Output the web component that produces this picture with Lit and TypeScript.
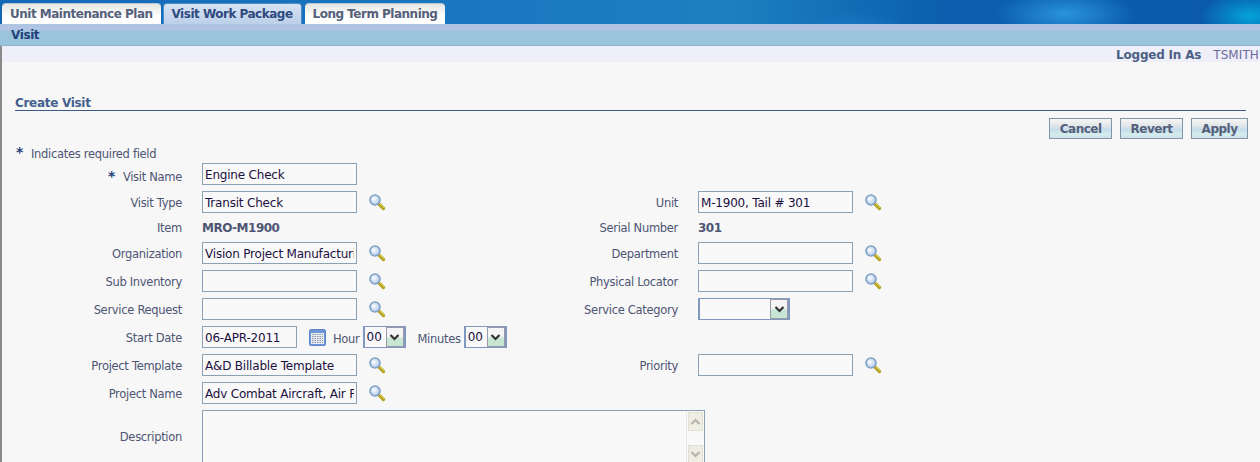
import { LitElement, html, css, svg } from 'lit';
import { customElement } from 'lit/decorators.js';

const lens = html`<svg class="lens" width="18" height="18" viewBox="0 0 18 18">
  <defs>
    <radialGradient id="glass" cx="0.4" cy="0.4" r="0.7">
      <stop offset="0" stop-color="#ffffff"></stop>
      <stop offset="1" stop-color="#9dbde4"></stop>
    </radialGradient>
  </defs>
  <path d="M10.5 10.5 L15.5 15.5" stroke="#b5a221" stroke-width="3.2" stroke-linecap="round"></path>
  <path d="M11 10 L16 15" stroke="#e0cf55" stroke-width="1"></path>
  <circle cx="7" cy="7" r="5" fill="url(#glass)" stroke="#7f9fc4" stroke-width="1.6"></circle>
</svg>`;

const calendar = html`<svg width="17" height="17" viewBox="0 0 17 17">
  <rect x="0.5" y="0.5" width="16" height="16" rx="1.5" fill="#6f96d6" stroke="#5f86c8"></rect>
  <rect x="2" y="4" width="13" height="11" fill="#e8edf4"></rect>
  ${[5, 7, 9, 11, 13].map(y => svg`<path d="M3 ${y + 0.5} H14" stroke="#8a93a6" stroke-dasharray="1.5 1"></path>`)}
</svg>`;

const chevron = html`<svg width="11" height="7" viewBox="0 0 11 7">
  <path d="M1.5 1 L5.5 5 L9.5 1" fill="none" stroke="#333" stroke-width="2.2"></path>
</svg>`;

@customElement('app-root')
export class AppRoot extends LitElement {
  static styles = css`
    :host {
      display: block;
      height: 462px;
      overflow: hidden;
      background: #f7f7f7;
      font-family: "DejaVu Sans", sans-serif;
      font-size: 11.5px;
      letter-spacing: -0.3px;
      color: #4d5573;
    }
    .banner {
      height: 24px;
      display: flex;
      align-items: flex-end;
      gap: 2px;
      padding-left: 2px;
      background:
        radial-gradient(ellipse 70px 24px at 1065px 14px, #2a93dc 0%, transparent 100%),
        radial-gradient(ellipse 50px 24px at 1250px 16px, #04a4d8 0%, transparent 100%),
        radial-gradient(ellipse 60px 18px at 850px 30px, #1c78c4 0%, transparent 100%),
        linear-gradient(90deg, #1468b8 0%, #1a78c0 40%, #1c80c0 58%, #0c60ae 74%, #0a58ac 100%);
    }
    .tab {
      height: 21px;
      box-sizing: border-box;
      padding: 3px 8px 0;
      border-radius: 4px 4px 0 0;
      border-top: 1px solid #b8c6d4;
      background: linear-gradient(#e4e6e2, #ffffff 60%);
      font-size: 12px;
      font-weight: bold;
      letter-spacing: -0.5px;
      color: #55607a;
      white-space: nowrap;
    }
    .tab.on {
      margin-right: 1px;
      background: linear-gradient(#d6e2f2, #bcd0ea);
      border: 1px solid #4a90c8;
      border-bottom: 0;
      color: #2f4a80;
    }
    .subnav {
      height: 22px;
      box-sizing: border-box;
      padding-left: 11px;
      background: linear-gradient(#afc3e3 0, #afc3e3 7px, #9cc3dc 7px);
      border-bottom: 1px solid #8fb6d0;
      font-size: 12px;
      font-weight: bold;
      letter-spacing: -0.4px;
      color: #1f3f7a;
      line-height: 22px;
    }
    .page { border-left: 2px solid #8a8a8a; height: 416px; }
    .user {
      height: 16px;
      box-sizing: border-box;
      padding: 1px 1px 0 0;
      background: #eeeff8;
      display: flex;
      justify-content: flex-end;
      gap: 12px;
      line-height: 16px;
      white-space: nowrap;
    }
    .user b { font-size: 12px; letter-spacing: -0.2px; color: #4d5f85; }
    .user span { font-size: 12px; letter-spacing: 0.1px; color: #6f6a9c; }
    .main {
      padding: 33px 14px 0 13px;
    }
    h2 {
      margin: 0;
      padding-top: 1px;
      height: 14px;
      font-size: 12px;
      font-weight: bold;
      letter-spacing: -0.3px;
      color: #43608f;
      line-height: 15px;
      border-bottom: 1px solid #38598a;
    }
    .actions {
      display: flex;
      justify-content: flex-end;
      gap: 8px;
      margin-top: 7px;
      margin-right: -2px;
    }
    button {
      height: 21px;
      padding: 0 9.5px;
      border: 1px solid #7f95a8;
      border-radius: 0;
      background: linear-gradient(#f4f5f5, #e6e9ea 30%, #c8dcec 55%, #d4ecec 80%, #d0e2e8);
      font: bold 12px "DejaVu Sans", sans-serif;
      letter-spacing: -0.5px;
      color: #55607a;
    }
    .note {
      margin: 7px 0 0 1px;
      display: flex;
      gap: 8px;
      line-height: 16px;
    }
    .star { color: #1f3f7a; font-weight: bold; font-size: 14px; line-height: 12px; }
    .form {
      margin: 1px 0 0 -15px;
      display: grid;
      grid-template-columns: 182px 338px 158px 1fr;
      row-gap: 6px;
      align-items: center;
    }
    .label { text-align: right; white-space: nowrap; padding-top: 1px; }
    .label.req { padding-top: 5px; }
    .label .star { margin-right: 8px; }
    .label.top { align-self: start; padding-top: 20px; }
    .field {
      padding-left: 20px;
      display: flex;
      align-items: center;
      min-height: 17px;
      white-space: nowrap;
    }
    .value { font-weight: bold; font-size: 12px; letter-spacing: -0.5px; color: #4d5573; }
    input {
      width: 155px;
      height: 22px;
      box-sizing: border-box;
      padding: 1px 2px 0;
      border: 1px solid #8aa0b4;
      background: #f9f9f9;
      font: 12px "DejaVu Sans", sans-serif;
      letter-spacing: -0.2px;
      color: #1c1040;
    }
    .lens { margin-left: 11px; }
    .select {
      height: 22px;
      box-sizing: border-box;
      display: flex;
      border: 2px solid #8098c0;
      border-width: 1px 2px;
      background: #f9f9f9;
    }
    .select select {
      appearance: none;
      flex: 1;
      min-width: 0;
      border: 0;
      background: transparent;
      padding: 0 2px;
      font: 12px "DejaVu Sans", sans-serif;
      color: #1c1040;
    }
    .select i {
      width: 18px;
      flex: none;
      box-sizing: border-box;
      display: flex;
      align-items: center;
      justify-content: center;
      border: 1px solid #9a9aa8;
      background: linear-gradient(#f4f4f4 45%, #c8e6d4 60%);
    }
    .wide { width: 92px; }
    .time { width: 43px; }
    .cal { margin-left: 12px; display: flex; }
    .hour { margin: 4px 3px 0 7px; }
    .min { margin: 4px 3px 0 12px; }
    .wrap { grid-column: 2 / 5; }
    .area {
      width: 503px;
      height: 60px;
      box-sizing: border-box;
      display: flex;
      justify-content: flex-end;
      border: 1px solid #8aa0b4;
      background: #f9f9f9;
    }
    .bar {
      width: 18px;
      padding: 1px 1px 0 1px;
      box-sizing: border-box;
      border-left: 1px solid #e8e8e0;
      display: flex;
      flex-direction: column;
      gap: 14px;
    }
    .bar i {
      height: 17px;
      flex: none;
      display: flex;
      align-items: center;
      justify-content: center;
      background: #eeeee2;
      border: 1px solid #e0e0d4;
    }
    .up { transform: rotate(180deg); opacity: .3; }
    .down { opacity: .3; }
  `;

  row(label: string, value: string, search = true) {
    return html`<div class="label">${label}</div>
      <div class="field"><input .value=${value} />${search ? lens : ''}</div>`;
  }

  render() {
    return html`
      <div class="banner">
        <div class="tab">Unit Maintenance Plan</div>
        <div class="tab on">Visit Work Package</div>
        <div class="tab">Long Term Planning</div>
      </div>
      <div class="subnav">Visit</div>
      <div class="page">
      <div class="user"><b>Logged In As</b><span>TSMITH</span></div>
      <div class="main">
        <h2>Create Visit</h2>
        <div class="actions">
          <button>Cancel</button>
          <button>Revert</button>
          <button>Apply</button>
        </div>
        <div class="note"><span class="star">*</span>Indicates required field</div>
        <div class="form">
          <div class="label req"><span class="star">*</span>Visit Name</div>
          <div class="field"><input .value=${'Engine Check'} /></div>
          <div></div><div></div>
          ${this.row('Visit Type', 'Transit Check')}
          ${this.row('Unit', 'M-1900, Tail # 301')}
          <div class="label">Item</div>
          <div class="field value">MRO-M1900</div>
          <div class="label">Serial Number</div>
          <div class="field value">301</div>
          ${this.row('Organization', 'Vision Project Manufacturing')}
          ${this.row('Department', '')}
          ${this.row('Sub Inventory', '')}
          ${this.row('Physical Locator', '')}
          ${this.row('Service Request', '')}
          <div class="label">Service Category</div>
          <div class="field">
            <div class="select wide"><select></select><i>${chevron}</i></div>
          </div>
          <div class="label">Start Date</div>
          <div class="field">
            <input style="width:95px" .value=${'06-APR-2011'} />
            <span class="cal">${calendar}</span>
            <span class="hour">Hour</span>
            <div class="select time"><select><option>00</option></select><i>${chevron}</i></div>
            <span class="min">Minutes</span>
            <div class="select time"><select><option>00</option></select><i>${chevron}</i></div>
          </div>
          <div></div><div></div>
          ${this.row('Project Template', 'A&D Billable Template')}
          ${this.row('Priority', '')}
          ${this.row('Project Name', 'Adv Combat Aircraft, Air Force')}
          <div></div><div></div>
          <div class="label top">Description</div>
          <div class="field wrap">
            <div class="area">
              <div class="bar">
                <i><svg class="up" width="11" height="7" viewBox="0 0 11 7"><path d="M1.5 1 L5.5 5 L9.5 1" fill="none" stroke="#333" stroke-width="2.2"></path></svg></i>
                <i><svg class="down" width="11" height="7" viewBox="0 0 11 7"><path d="M1.5 1 L5.5 5 L9.5 1" fill="none" stroke="#333" stroke-width="2.2"></path></svg></i>
              </div>
            </div>
          </div>
        </div>
      </div>
      </div>
    `;
  }
}
